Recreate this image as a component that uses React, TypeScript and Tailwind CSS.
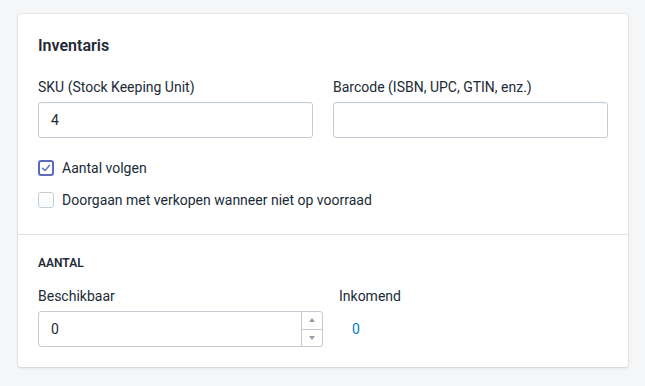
import React from 'react';

const font = { fontFamily: 'Roboto, "Noto Sans", sans-serif' };

const Checkbox: React.FC<{ checked?: boolean; label: string }> = ({ checked, label }) => (
  <label className="flex items-center h-5 text-[14px] text-[#212b36]">
    {checked ? (
      <span className="w-4 h-4 rounded-[3px] border-2 border-[#5c6ac4] bg-white flex items-center justify-center">
        <svg width="10" height="10" viewBox="0 0 10 10" fill="none">
          <path d="M1.5 5.2 L4 7.6 L8.6 2.2" stroke="#5c6ac4" strokeWidth="1.4" strokeLinecap="round" strokeLinejoin="round" />
        </svg>
      </span>
    ) : (
      <span className="w-4 h-4 rounded-[3px] border border-[#c4cdd5] bg-gradient-to-b from-white to-[#f9fafb]" />
    )}
    <span className="ml-2">{label}</span>
  </label>
);

const App: React.FC = () => {
  return (
    <div className="w-[645px] h-[386px] bg-[#f4f6f8] pt-[14px] pl-[18px]" style={font}>
      <div className="w-[610px] bg-white rounded-[3px] shadow-[0_0_0_1px_rgba(63,63,68,0.05),0_1px_3px_0_rgba(63,63,68,0.15)]">
        <div className="px-5 pt-5 pb-6 border-b border-[#dfe3e8]">
          <h2 className="text-[16px] leading-6 font-semibold text-[#212b36]">Inventaris</h2>
          <div className="flex gap-5 mt-[19px]">
            <div className="flex-1">
              <div className="text-[14px] leading-5 text-[#212b36]">SKU (Stock Keeping Unit)</div>
              <div className="mt-[5px] h-9 border border-[#c4cdd5] rounded-[3px] px-3 flex items-center text-[14px] text-[#212b36] shadow-[inset_0_1px_0_0_rgba(99,115,129,0.05)]">4</div>
            </div>
            <div className="flex-1">
              <div className="text-[14px] leading-5 text-[#212b36]">Barcode (ISBN, UPC, GTIN, enz.)</div>
              <div className="mt-[5px] h-9 border border-[#c4cdd5] rounded-[3px] shadow-[inset_0_1px_0_0_rgba(99,115,129,0.05)]" />
            </div>
          </div>
          <div className="mt-5 flex flex-col gap-3">
            <Checkbox checked label="Aantal volgen" />
            <Checkbox label="Doorgaan met verkopen wanneer niet op voorraad" />
          </div>
        </div>
        <div className="px-5 pt-5 pb-5">
          <h3 className="text-[12px] leading-4 font-semibold uppercase text-[#212b36]">Aantal</h3>
          <div className="flex mt-[15px]">
            <div className="w-[285px]">
              <div className="text-[14px] leading-5 text-[#212b36]">Beschikbaar</div>
              <div className="mt-[5px] h-9 border border-[#c4cdd5] rounded-[3px] flex text-[14px] text-[#212b36]">
                <div className="flex-1 flex items-center px-3">0</div>
                <div className="w-[21px] border-l border-[#c4cdd5] flex flex-col">
                  <div className="flex-1 flex items-center justify-center border-b border-[#c4cdd5]">
                    <svg width="6" height="4" viewBox="0 0 6 4"><path d="M0 4 L3 0 L6 4 Z" fill="#919eab" /></svg>
                  </div>
                  <div className="flex-1 flex items-center justify-center">
                    <svg width="6" height="4" viewBox="0 0 6 4"><path d="M0 0 L3 4 L6 0 Z" fill="#919eab" /></svg>
                  </div>
                </div>
              </div>
            </div>
            <div className="ml-[16px]">
              <div className="text-[14px] leading-5 text-[#212b36]">Inkomend</div>
              <div className="mt-[5px] h-9 flex items-center pl-[13px] text-[14px] text-[#007ace]">0</div>
            </div>
          </div>
        </div>
      </div>
    </div>
  );
};

export default App;
